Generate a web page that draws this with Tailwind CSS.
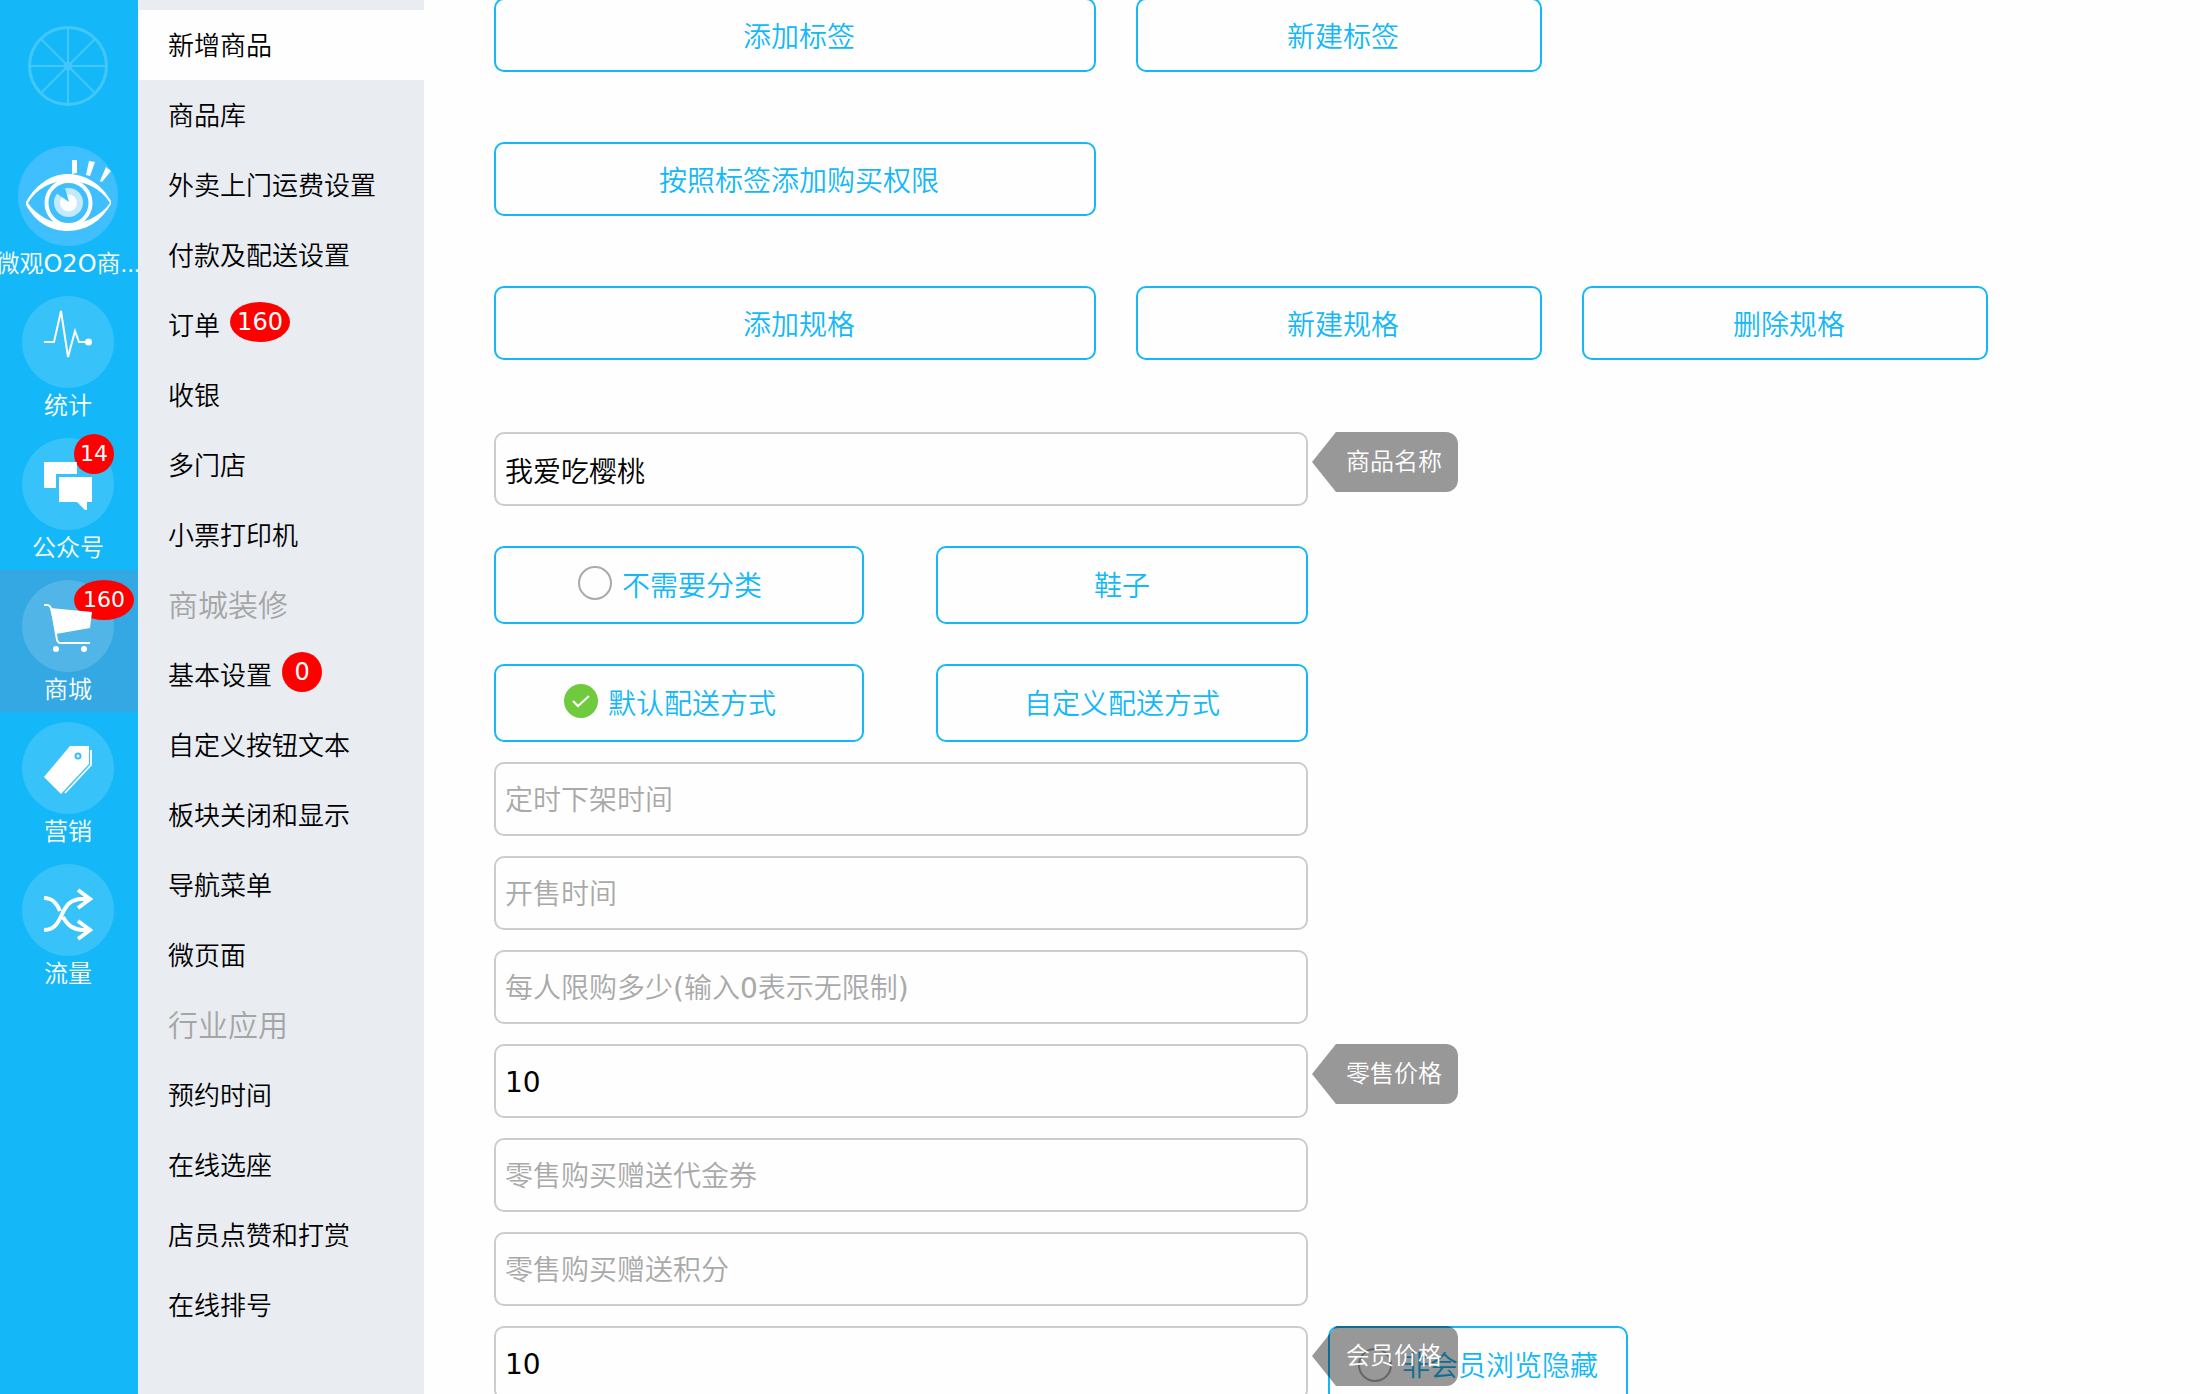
<!DOCTYPE html>
<html lang="zh-CN">
<head>
<meta charset="utf-8">
<title>新增商品</title>
<script src="https://cdn.jsdelivr.net/npm/@tailwindcss/browser@4"></script>
</head>
<body class="bg-[#fefefe] font-['DejaVu_Sans','Noto_Sans_CJK_SC_DemiLight','Noto_Sans_CJK_SC_Light','Noto_Sans_CJK_SC',sans-serif] font-normal text-black">
<div class="flex h-screen overflow-hidden">

  <nav aria-label="主导航" class="flex w-[138px] shrink-0 flex-col bg-[#14b8f8] text-2xl leading-9 text-white">
    <div class="flex h-[146px] justify-center pt-[26px] pr-0.5">
      <svg class="size-20" viewBox="0 0 80 80" fill="none" stroke="#43c6f9" aria-hidden="true">
        <circle cx="40" cy="40" r="38.5" stroke-width="3"/>
        <path stroke-width="2" d="M40 2v76M2 40h76M13 13l54 54M67 13L13 67"/>
        <circle cx="40" cy="40" r="4" fill="#43c6f9"/>
      </svg>
    </div>
    <a href="#shop" class="flex h-[140px] flex-col items-center pr-0.5">
      <svg class="size-[100px] shrink-0" viewBox="0 0 100 100" aria-hidden="true">
        <circle cx="50" cy="50" r="50" fill="#40bfff"/>
        <path fill="#fff" fill-rule="evenodd" d="M8 56C18 38 34 28 50 28s33 9 43 27v3C83 76 67 85 50 85S18 77 8 59zM10 57c9 13 24 21 40 21s33-8 42-21C83 42 67 35 50 35S19 42 10 57z"/>
        <circle cx="50.500" cy="57" r="22" fill="#40bfff" stroke="#fff" stroke-width="4"/>
        <circle cx="50.500" cy="56.500" r="14.500" fill="#c3eaff"/>
        <circle cx="50.500" cy="57" r="8.500" fill="#fff"/>
        <path fill="#40bfff" d="M38 47l13 9-4-14-5 1z"/>
        <path fill="#fff" d="M54 14h5v13l-5 1zM71 15l6 1-5 14-4-1zM88 21l5 4-9 11-2-1z"/>
      </svg>
      <span class="whitespace-nowrap">微观O2O商<span class="font-['Liberation_Sans',sans-serif]">...</span></span>
    </a>
    <a href="#stats" class="flex h-[142px] flex-col items-center pt-2.5 pr-0.5">
      <svg class="size-[92px] shrink-0" viewBox="0 0 92 92" fill="none" aria-hidden="true">
        <circle cx="46" cy="46" r="46" fill="#fff" fill-opacity=".15"/>
        <path stroke="#fff" stroke-width="2" d="M22 46h10l7-31 7 46 7-26 4 11h8"/>
        <circle cx="66.500" cy="46" r="3.500" fill="#fff"/>
      </svg>
      <span>统计</span>
    </a>
    <a href="#wechat" class="relative flex h-[142px] flex-col items-center pt-2.5 pr-0.5">
      <svg class="size-[92px] shrink-0" viewBox="0 0 92 92" aria-hidden="true">
        <circle cx="46" cy="46" r="46" fill="#fff" fill-opacity=".15"/>
        <path fill="#fff" d="M37 39h33v25h-5v8h-2l-8-8H37z"/>
      </svg>
      <span class="absolute top-1.5 left-[74px] flex h-10 w-10 items-center justify-center rounded-[50%] bg-[red] text-[22px]">14</span>
      <svg class="absolute top-2.5 left-[22px] size-[92px]" viewBox="0 0 92 92" aria-hidden="true">
        <path fill="#fff" d="M22 24h33v12H34v14H22z"/>
      </svg>
      <span>公众号</span>
    </a>
    <a href="#mall" aria-current="page" class="relative flex h-[142px] flex-col items-center bg-[#33a8e3] pt-2.5 pr-0.5">
      <svg class="size-[92px] shrink-0" viewBox="0 0 92 92" aria-hidden="true">
        <circle cx="46" cy="46" r="46" fill="#fff" fill-opacity=".15"/>
      </svg>
      <span class="absolute top-2.5 left-[74px] flex h-10 w-[60px] items-center justify-center rounded-[50%] bg-[red] text-[22px]">160</span>
      <svg class="absolute top-2.5 left-[22px] size-[92px]" viewBox="0 0 92 92" aria-hidden="true">
        <path fill="#fff" d="M28 28l42 4-2 16-34 6z"/>
        <path fill="none" stroke="#fff" stroke-width="2" d="M22 25h3c3 0 4 2 5 6l5 29c1 3 2 3 5 3h28"/>
        <circle cx="34" cy="69" r="3" fill="#fff"/><circle cx="62" cy="69" r="3" fill="#fff"/>
      </svg>
      <span>商城</span>
    </a>
    <a href="#marketing" class="flex h-[142px] flex-col items-center pt-2.5 pr-0.5">
      <svg class="size-[92px] shrink-0" viewBox="0 0 92 92" fill="none" aria-hidden="true">
        <circle cx="46" cy="46" r="46" fill="#fff" fill-opacity=".15"/>
        <path fill="#fff" d="M48 24h19v18L39 72 22 55z"/>
        <circle cx="56" cy="34" r="2.500" fill="#fff" stroke="#35c1f9" stroke-width="2"/>
        <path stroke="#fff" stroke-width="1.800" d="M69 28v15L43 71"/>
      </svg>
      <span>营销</span>
    </a>
    <a href="#traffic" class="flex h-[142px] flex-col items-center pt-2.5 pr-0.5">
      <svg class="size-[92px] shrink-0" viewBox="0 0 92 92" fill="none" aria-hidden="true">
        <circle cx="46" cy="46" r="46" fill="#fff" fill-opacity=".15"/>
        <path stroke="#fff" stroke-width="4" d="M22 66c22 0 13-31 38-31h7M22 34c9 0 13 6 16 13M41 53c5 9 10 12 19 13h7M56 26l12 9-12 9M56 57l12 9-12 9"/>
      </svg>
      <span>流量</span>
    </a>
  </nav>

  <nav aria-label="商城菜单" class="w-[286px] shrink-0 bg-[#e9edf2] pt-2.5 text-[26px]">
    <ul>
      <li><a href="#1" aria-current="page" class="flex h-[70px] items-center bg-[#fefefe] pt-0.5 pl-[30px]">新增商品</a></li>
      <li><a href="#2" class="flex h-[70px] items-center pt-0.5 pl-[30px]">商品库</a></li>
      <li><a href="#3" class="flex h-[70px] items-center pt-0.5 pl-[30px]">外卖上门运费设置</a></li>
      <li><a href="#4" class="flex h-[70px] items-center pt-0.5 pl-[30px]">付款及配送设置</a></li>
      <li><a href="#5" class="flex h-[70px] items-center gap-2.5 pt-0.5 pl-[30px]">订单<span class="mb-2 flex h-10 w-[60px] items-center justify-center rounded-[50%] bg-[red] text-2xl text-white">160</span></a></li>
      <li><a href="#6" class="flex h-[70px] items-center pt-0.5 pl-[30px]">收银</a></li>
      <li><a href="#7" class="flex h-[70px] items-center pt-0.5 pl-[30px]">多门店</a></li>
      <li><a href="#8" class="flex h-[70px] items-center pt-0.5 pl-[30px]">小票打印机</a></li>
      <li class="flex h-[70px] items-center pt-0.5 pl-[30px] text-3xl text-[#a5a5a5]">商城装修</li>
      <li><a href="#9" class="flex h-[70px] items-center gap-2.5 pt-0.5 pl-[30px]">基本设置<span class="mb-2 flex h-10 w-10 items-center justify-center rounded-[50%] bg-[red] text-2xl text-white">0</span></a></li>
      <li><a href="#10" class="flex h-[70px] items-center pt-0.5 pl-[30px]">自定义按钮文本</a></li>
      <li><a href="#11" class="flex h-[70px] items-center pt-0.5 pl-[30px]">板块关闭和显示</a></li>
      <li><a href="#12" class="flex h-[70px] items-center pt-0.5 pl-[30px]">导航菜单</a></li>
      <li><a href="#13" class="flex h-[70px] items-center pt-0.5 pl-[30px]">微页面</a></li>
      <li class="flex h-[70px] items-center pt-0.5 pl-[30px] text-3xl text-[#a5a5a5]">行业应用</li>
      <li><a href="#14" class="flex h-[70px] items-center pt-0.5 pl-[30px]">预约时间</a></li>
      <li><a href="#15" class="flex h-[70px] items-center pt-0.5 pl-[30px]">在线选座</a></li>
      <li><a href="#16" class="flex h-[70px] items-center pt-0.5 pl-[30px]">店员点赞和打赏</a></li>
      <li><a href="#17" class="flex h-[70px] items-center pt-0.5 pl-[30px]">在线排号</a></li>
    </ul>
  </nav>

  <main class="-mt-0.5 min-w-0 flex-1 pl-[70px] text-[28px]">
    <form>
      <div class="flex flex-col gap-[70px] text-[#14b8f8]">
        <div class="flex gap-10">
          <button type="button" class="h-[74px] w-[602px] rounded-[10px] border-2 border-[#14b8f8] pt-1.5 pl-2">添加标签</button>
          <button type="button" class="h-[74px] w-[406px] rounded-[10px] border-2 border-[#14b8f8] pt-1.5 pl-2">新建标签</button>
        </div>
        <div class="flex gap-10">
          <button type="button" class="h-[74px] w-[602px] rounded-[10px] border-2 border-[#14b8f8] pt-1.5 pl-2">按照标签添加购买权限</button>
        </div>
        <div class="flex gap-10">
          <button type="button" class="h-[74px] w-[602px] rounded-[10px] border-2 border-[#14b8f8] pt-1.5 pl-2">添加规格</button>
          <button type="button" class="h-[74px] w-[406px] rounded-[10px] border-2 border-[#14b8f8] pt-1.5 pl-2">新建规格</button>
          <button type="button" class="h-[74px] w-[406px] rounded-[10px] border-2 border-[#14b8f8] pt-1.5 pl-2">删除规格</button>
        </div>
      </div>

      <div class="mt-[72px] flex gap-1">
        <input id="name" type="text" value="我爱吃樱桃" class="h-[74px] w-[814px] rounded-[10px] border-2 border-[#ccc] px-[9px] pt-0.5">
        <label for="name" class="flex h-[60px] text-2xl text-white">
          <svg class="h-[60px] w-6" viewBox="0 0 24 60" aria-hidden="true"><path d="M24 0v60L0 30z" fill="#000" fill-opacity=".4"/></svg>
          <span class="flex items-center rounded-r-xl bg-black/40 pr-4 pl-2.5">商品名称</span>
        </label>
      </div>

      <div class="mt-10 grid w-[814px] grid-cols-[370px_1fr] gap-x-[72px] gap-y-10 text-[#14b8f8]">
        <label class="flex h-[78px] items-center justify-center gap-2.5 rounded-[10px] border-2 border-[#14b8f8] pt-1 pr-[18px]">
          <input type="checkbox" class="mb-2 size-[34px] appearance-none rounded-full border-2 border-[#aaa]">不需要分类
        </label>
        <button type="button" class="h-[78px] rounded-[10px] border-2 border-[#14b8f8] pt-1">鞋子</button>
        <label class="flex h-[78px] items-center justify-center gap-2.5 rounded-[10px] border-2 border-[#14b8f8] pt-1 pr-[18px]">
          <span class="relative mb-2 flex size-[34px]">
            <input type="checkbox" checked class="size-[34px] appearance-none rounded-full bg-[#6fca3d]">
            <svg class="pointer-events-none absolute inset-0" viewBox="0 0 34 34" fill="none" stroke="#fff" stroke-width="2" aria-hidden="true"><path d="M9 17l5 5 11-10"/></svg>
          </span>默认配送方式
        </label>
        <button type="button" class="h-[78px] rounded-[10px] border-2 border-[#14b8f8] pt-1">自定义配送方式</button>
      </div>

      <div class="mt-5 flex flex-col gap-5">
        <input type="text" aria-label="定时下架时间" placeholder="定时下架时间" class="h-[74px] w-[814px] rounded-[10px] border-2 border-[#ccc] px-[9px] pt-0.5 placeholder:text-[#a9a9a9]">
        <input type="text" aria-label="开售时间" placeholder="开售时间" class="h-[74px] w-[814px] rounded-[10px] border-2 border-[#ccc] px-[9px] pt-0.5 placeholder:text-[#a9a9a9]">
        <input type="text" aria-label="每人限购多少" placeholder="每人限购多少(输入0表示无限制)" class="h-[74px] w-[814px] rounded-[10px] border-2 border-[#ccc] px-[9px] pt-0.5 placeholder:text-[#a9a9a9]">
        <div class="flex gap-1">
          <input id="retail" type="text" value="10" class="h-[74px] w-[814px] rounded-[10px] border-2 border-[#ccc] px-[9px] pt-0.5">
          <label for="retail" class="flex h-[60px] text-2xl text-white">
            <svg class="h-[60px] w-6" viewBox="0 0 24 60" aria-hidden="true"><path d="M24 0v60L0 30z" fill="#000" fill-opacity=".4"/></svg>
            <span class="flex items-center rounded-r-xl bg-black/40 pr-4 pl-2.5">零售价格</span>
          </label>
        </div>
        <input type="text" aria-label="零售购买赠送代金券" placeholder="零售购买赠送代金券" class="h-[74px] w-[814px] rounded-[10px] border-2 border-[#ccc] px-[9px] pt-0.5 placeholder:text-[#a9a9a9]">
        <input type="text" aria-label="零售购买赠送积分" placeholder="零售购买赠送积分" class="h-[74px] w-[814px] rounded-[10px] border-2 border-[#ccc] px-[9px] pt-0.5 placeholder:text-[#a9a9a9]">
        <div class="flex gap-5">
          <div class="relative">
            <input id="member" type="text" value="10" class="h-[74px] w-[814px] rounded-[10px] border-2 border-[#ccc] px-[9px] pt-0.5">
            <label for="member" class="absolute top-0 left-full z-10 ml-1 flex h-[60px] text-2xl whitespace-nowrap text-white">
              <svg class="h-[60px] w-6" viewBox="0 0 24 60" aria-hidden="true"><path d="M24 0v60L0 30z" fill="#000" fill-opacity=".4"/></svg>
              <span class="flex items-center rounded-r-xl bg-black/40 pr-4 pl-2.5">会员价格</span>
            </label>
          </div>
          <label class="flex h-[78px] w-[300px] items-center justify-center gap-2.5 rounded-[10px] border-2 border-[#14b8f8] pt-1 text-[#14b8f8]">
            <input type="checkbox" class="mb-1 size-[34px] appearance-none rounded-full border-2 border-[#aaa]">非会员浏览隐藏
          </label>
        </div>
      </div>
    </form>
  </main>
</div>
</body>
</html>
